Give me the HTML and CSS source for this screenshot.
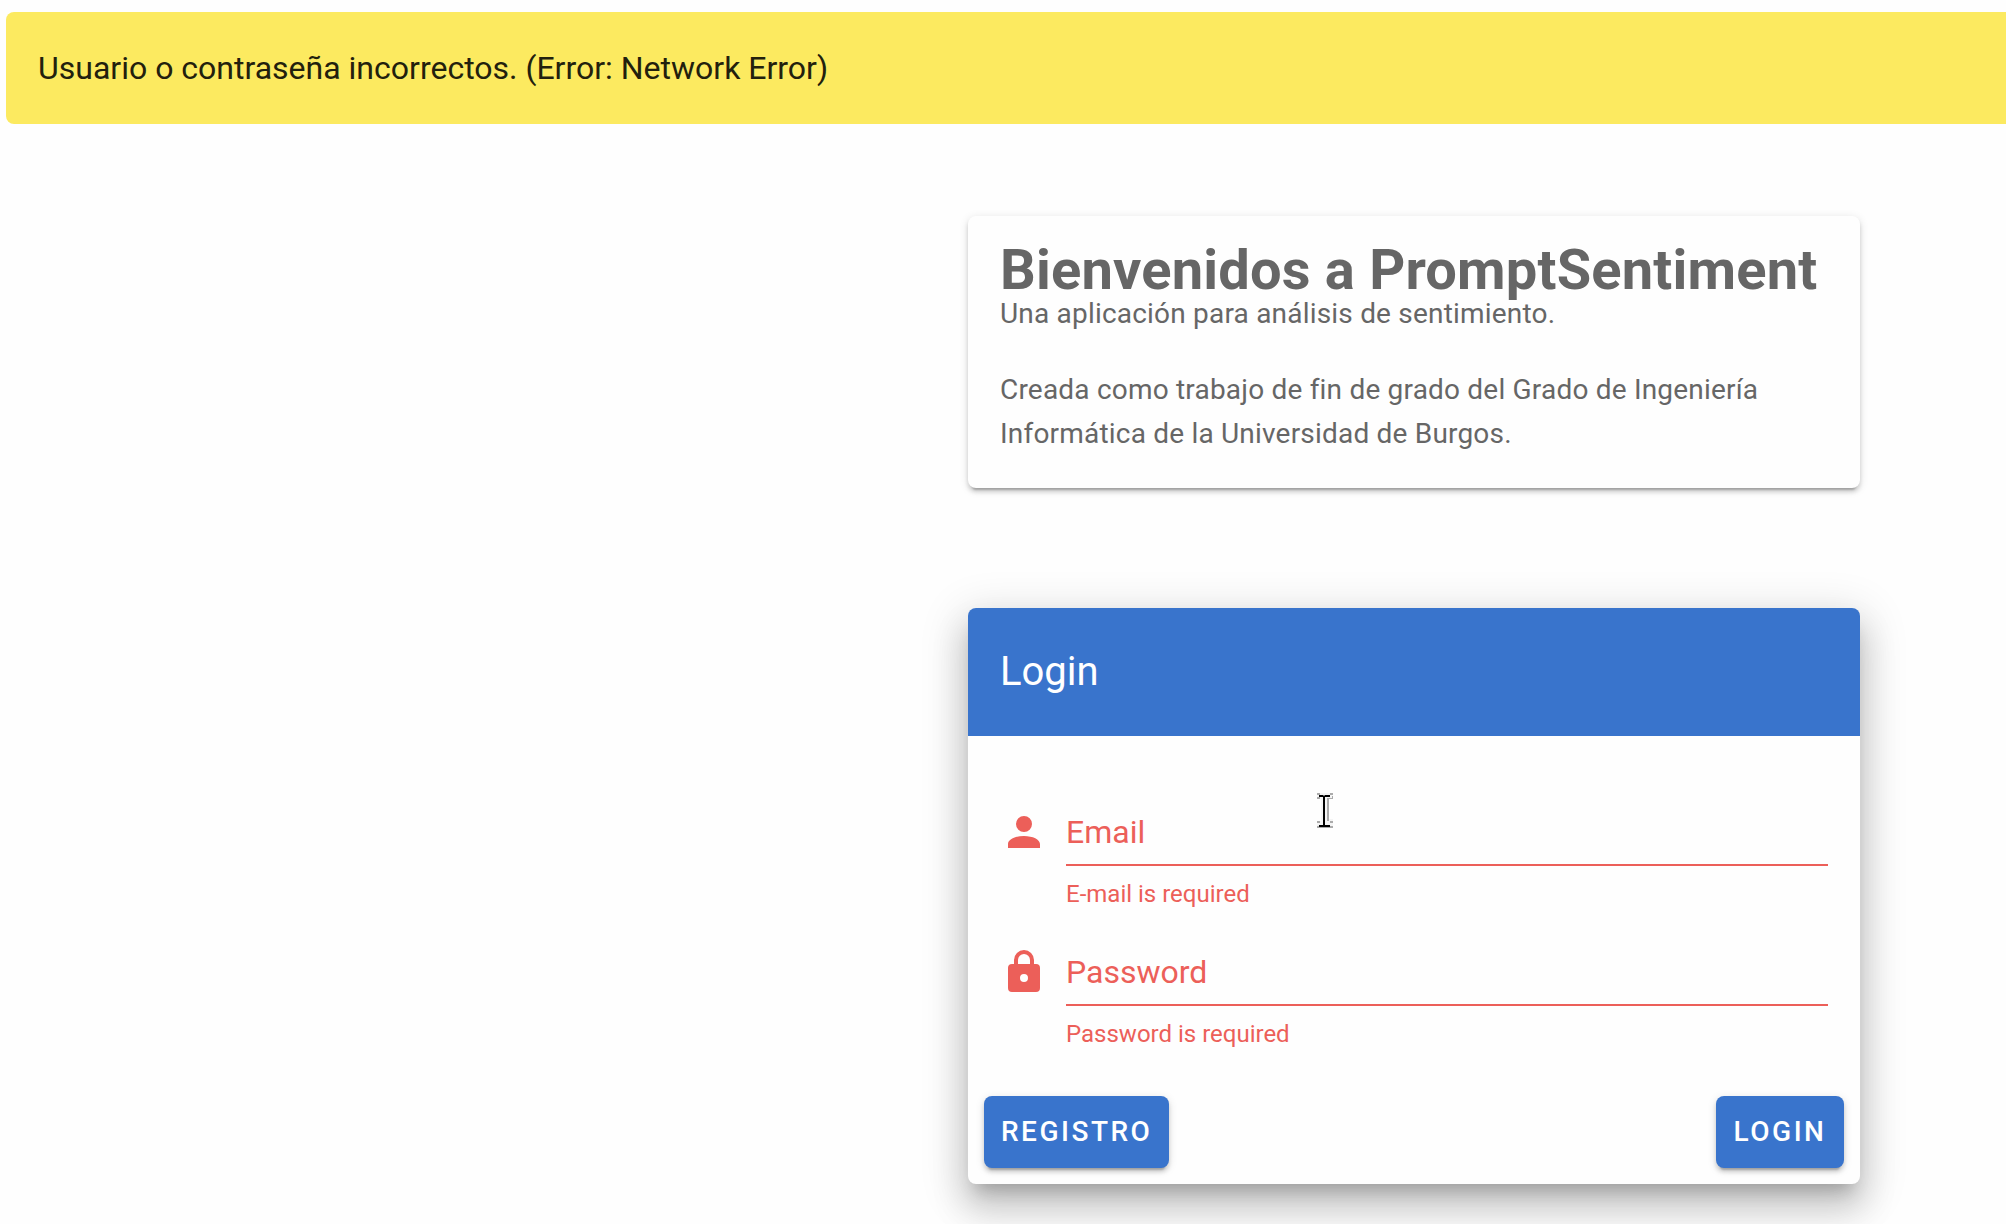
FILE: index.html
```html
<!DOCTYPE html>
<html lang="es">
<head>
<meta charset="utf-8">
<meta name="viewport" content="width=device-width, initial-scale=1">
<title>PromptSentiment</title>
<link rel="stylesheet" href="styles.css">
</head>
<body>
<div class="alert" role="alert">Usuario o contraseña incorrectos. (Error: Network Error)</div>
<main class="layout">
  <div class="column">
    <section class="card welcome">
      <h1 class="welcome-title">Bienvenidos a PromptSentiment</h1>
      <p class="welcome-text">Una aplicación para análisis de sentimiento.</p>
      <p class="welcome-text">Creada como trabajo de fin de grado del Grado de Ingeniería Informática de la Universidad de Burgos.</p>
    </section>
    <form class="card login">
      <header class="toolbar"><h2 class="toolbar-title">Login</h2></header>
      <div class="fields">
        <div class="field">
          <svg class="icon" viewBox="0 0 24 24" aria-hidden="true"><path d="M12 4a4 4 0 0 1 4 4 4 4 0 0 1-4 4 4 4 0 0 1-4-4 4 4 0 0 1 4-4m0 10c4.42 0 8 1.790 8 4v2H4v-2c0-2.210 3.580-4 8-4z"/></svg>
          <div class="control">
            <label class="label" for="email">Email</label>
            <input class="input" id="email" type="email" aria-describedby="email-error">
          </div>
          <p class="message" id="email-error">E-mail is required</p>
        </div>
        <div class="field">
          <svg class="icon" viewBox="0 0 24 24" aria-hidden="true"><path d="M12 17a2 2 0 0 0 2-2 2 2 0 0 0-2-2 2 2 0 0 0-2 2 2 2 0 0 0 2 2m6-9a2 2 0 0 1 2 2v10a2 2 0 0 1-2 2H6a2 2 0 0 1-2-2V10a2 2 0 0 1 2-2h1V6a5 5 0 0 1 5-5 5 5 0 0 1 5 5v2h1m-6-5a3 3 0 0 0-3 3v2h6V6a3 3 0 0 0-3-3z"/></svg>
          <div class="control">
            <label class="label" for="password">Password</label>
            <input class="input" id="password" type="password" aria-describedby="password-error">
          </div>
          <p class="message" id="password-error">Password is required</p>
        </div>
      </div>
      <footer class="actions">
        <button class="button" type="button">REGISTRO</button>
        <button class="button" type="submit">LOGIN</button>
      </footer>
      <svg class="pointer" viewBox="0 0 18 40" aria-hidden="true">
        <path class="pointer-halo" d="M1 1h16v6h-4v20h4v8H1v-6h4V7H1z"/>
        <path class="pointer-shade" d="M1 1h3v2H1zM14 1h3v2h-3zM1 5h3v2H1zM11 6h5V4h1v3h-4v22h-2zM1 29h3v2H1zM14 29h3v2h-3zM1 34h16v2H1z"/>
        <path d="M3 3h4l1 1 1-1h5v2H9v28h5v2H3v-2h4V5H3z"/>
      </svg>
    </form>
  </div>
</main>
</body>
</html>
```
FILE: styles.css
```css
*,
*::before,
*::after {
  box-sizing: border-box;
}

body {
  margin: 0;
  padding-top: 12px;
  background: #fefefe;
  color: #666;
  font-family: Roboto, "Liberation Sans", sans-serif;
  font-size: 32px;
  line-height: 48px;
  overflow-x: hidden;
}

h1,
h2,
p {
  margin: 0;
}

.alert {
  margin-left: 6px;
  padding: 32px;
  border-radius: 8px 0 0 8px;
  background: #fcea60;
  color: #22200d;
}

.layout {
  display: grid;
  grid-template-columns: 968fr 892fr 146fr;
  padding: 92px 0 40px;
}

.column {
  grid-column: 2;
  display: grid;
  gap: 120px;
}

.card {
  border-radius: 8px;
  background: #fefefe;
}

.welcome {
  padding: 32px;
  font-size: 28px;
  line-height: 44px;
  letter-spacing: 0.0071em;
  box-shadow: 0 6px 2px -4px rgba(0, 0, 0, 0.2), 0 4px 4px 0 rgba(0, 0, 0, 0.14), 0 2px 10px 0 rgba(0, 0, 0, 0.12);
}

.welcome-title {
  font-size: 56px;
  font-weight: 700;
  line-height: 44px;
}

.welcome-text + .welcome-text {
  margin-top: 32px;
}

.login {
  position: relative;
  box-shadow: 0 14px 16px -8px rgba(0, 0, 0, 0.2), 0 24px 34px 4px rgba(0, 0, 0, 0.14), 0 10px 44px 8px rgba(0, 0, 0, 0.12);
}

.toolbar {
  display: flex;
  align-items: center;
  height: 128px;
  padding: 0 32px;
  border-radius: 8px 8px 0 0;
  background: #3974cc;
  color: #fff;
}

.toolbar-title {
  font-size: 40px;
  font-weight: 400;
}

.fields {
  padding: 32px;
  color: #ec5f59;
}

.field {
  display: grid;
  grid-template-columns: 48px 1fr;
  column-gap: 18px;
  row-gap: 14px;
  padding-top: 32px;
}

.icon {
  width: 48px;
  height: 48px;
  margin-top: 8px;
  fill: currentColor;
}

.control {
  display: grid;
  height: 66px;
  border-bottom: 2px solid currentColor;
}

.label,
.input {
  grid-area: 1 / 1;
}

.label {
  align-self: center;
  line-height: 40px;
}

.input {
  width: 100%;
  padding: 0;
  border: 0;
  outline: 0;
  background: transparent;
  color: inherit;
  font: inherit;
}

.message {
  grid-column: 2;
  font-size: 24px;
  line-height: 28px;
}

.actions {
  display: flex;
  justify-content: space-between;
  padding: 16px;
}

.button {
  min-width: 128px;
  height: 72px;
  padding: 0 17px;
  border: 0;
  border-radius: 8px;
  background: #3974cc;
  color: #fff;
  font: 500 28px/44px Roboto, "Liberation Sans", sans-serif;
  letter-spacing: 0.0893em;
  box-shadow: 0 6px 2px -4px rgba(0, 0, 0, 0.2), 0 4px 4px 0 rgba(0, 0, 0, 0.14), 0 2px 10px 0 rgba(0, 0, 0, 0.12);
}

.pointer {
  position: absolute;
  top: 184px;
  left: 348px;
  width: 18px;
  height: 40px;
  pointer-events: none;
}

.pointer-shade {
  fill: #aaa;
}

.pointer-halo {
  fill: #f4f4f4;
}
```
